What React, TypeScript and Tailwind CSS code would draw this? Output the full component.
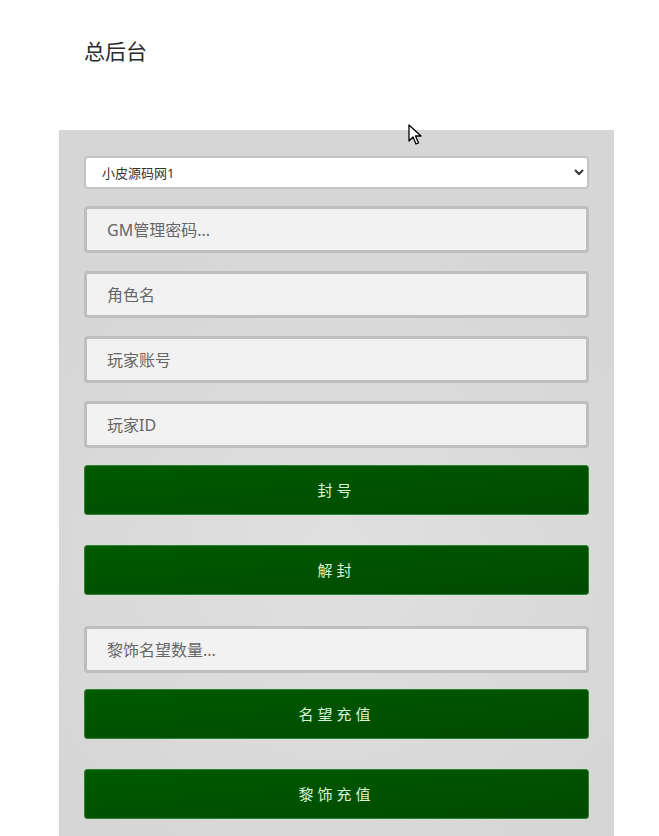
import React from "react";

const inputClass =
  "w-full h-[47px] px-[20px] bg-[#f2f2f2] border-[3px] border-[#bebebe] rounded-[4px] text-[16px] text-[#333] placeholder:text-[#666] focus:outline-none";

const buttonClass =
  "w-full h-[50px] rounded-[3px] bg-gradient-to-br from-[#005a00] to-[#004a00] border border-[#2e852e] text-[15px] tracking-[4px] text-[#d8f5d8]";

const App = () => {
  return (
    <div
      className="relative min-h-[836px] w-[659px] bg-white overflow-hidden"
      style={{ fontFamily: '"Noto Sans", "Noto Sans CJK SC", sans-serif' }}
    >
      <div className="pl-[84px] pt-[35px] h-[130px]">
        <h2 className="text-[21px] leading-[32px] text-[#2a2a2a]">总后台</h2>
      </div>

      <div className="mx-[59px] w-[555px] min-h-[706px] bg-[radial-gradient(circle_at_50%_60%,#e0e0e0,#d6d6d6_70%)] px-[25px] pt-[26px] pb-[16px]">
        <select className="w-full h-[33px] pl-[12px] pr-[6px] bg-white border-2 border-[#c4c4c4] rounded-[4px] text-[13px] text-[#333] focus:outline-none">
          <option>小皮源码网1</option>
        </select>

        <div className="mt-[17px] flex flex-col gap-[18px]">
          <input className={inputClass} placeholder="GM管理密码..." />
          <input className={inputClass} placeholder="角色名" />
          <input className={inputClass} placeholder="玩家账号" />
          <input className={inputClass} placeholder="玩家ID" />
        </div>

        <button className={`${buttonClass} mt-[17px]`}>封号</button>
        <button className={`${buttonClass} mt-[30px]`}>解封</button>

        <input className={`${inputClass} mt-[31px]`} placeholder="黎饰名望数量..." />

        <button className={`${buttonClass} mt-[16px]`}>名望充值</button>
        <button className={`${buttonClass} mt-[30px]`}>黎饰充值</button>
      </div>

      <svg
        className="absolute left-[408px] top-[124px]"
        width="14"
        height="22"
        viewBox="0 0 14 22"
      >
        <path
          d="M1 1 L1 17 L5 13 L8 20 L10.5 19 L7.5 12 L13 12 Z"
          fill="white"
          stroke="black"
          strokeWidth="1.3"
          strokeLinejoin="round"
        />
      </svg>
    </div>
  );
};

export default App;
